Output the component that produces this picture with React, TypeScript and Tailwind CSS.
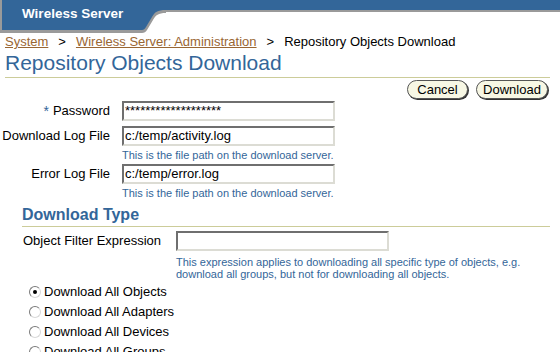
import React from "react";

const font = { fontFamily: '"Liberation Sans", Arial, sans-serif' };

function Field({ value, width = "w-[213px]" }: { value: string; width?: string }) {
  return (
    <div
      className={`${width} h-[20px] border-2 border-t-[#6f6f6f] border-l-[#6f6f6f] border-r-[#dcdcd4] border-b-[#dcdcd4] bg-white pl-[1px] text-[13px] leading-[16px] text-black whitespace-nowrap overflow-hidden`}
    >
      {value}
    </div>
  );
}

function Radio({ label, checked }: { label: string; checked?: boolean }) {
  return (
    <div className="flex h-[20px] items-center gap-[3px] pl-[29px] text-[13px] text-black">
      <span className="flex h-[12px] w-[12px] items-center justify-center rounded-full border border-t-[#7a7a7a] border-l-[#7a7a7a] border-r-[#d8d8d8] border-b-[#d8d8d8] bg-white">
        {checked && <span className="h-[4px] w-[4px] rounded-full bg-black" />}
      </span>
      <span className="whitespace-nowrap">{label}</span>
    </div>
  );
}

function PillButton({ label, width }: { label: string; width: string }) {
  return (
    <button
      type="button"
      className={`${width} h-[19px] rounded-full border border-[#555] bg-[#f7f7e4] text-center text-[13px] leading-[16px] text-black shadow-[1px_1px_0_#333]`}
    >
      {label}
    </button>
  );
}

export default function App() {
  return (
    <div className="h-[352px] w-[560px] overflow-hidden bg-white" style={font}>
      {/* branding bar */}
      <div className="flex h-[34px] items-start">
        <div className="w-[2px] h-[33px] bg-[#9a9a9a]" />
        <div className="flex h-[33px] w-[140px] items-center border-b-[3px] border-[#9a9a9a] bg-[#336699] pl-[20px] pb-[2px] text-[13.5px] font-bold text-white">
          Wireless Server
        </div>
        <svg width="24" height="33" viewBox="0 0 24 33" className="shrink-0">
          <path d="M0 3 H24 V13 C16 13 14 15 11 20 L5 30 C4 32 2 33 0 33 Z" fill="#9a9a9a" />
          <path d="M0 0 H24 V10 C15 10 13 12 10 17 L4 27 C3 29 1.5 30 0 30 Z" fill="#336699" />
        </svg>
        <div className="h-[12px] flex-1 border-b-2 border-[#9a9a9a] bg-[#336699]" />
      </div>

      {/* breadcrumbs */}
      <div className="flex items-center pl-[5px] text-[13px] leading-[15px] text-black">
        <span className="text-[#996633] underline">System</span>
        <span className="px-[10px]">&gt;</span>
        <span className="text-[#996633] underline">Wireless Server: Administration</span>
        <span className="px-[10px]">&gt;</span>
        <span>Repository Objects Download</span>
      </div>

      <div className="mx-[5px] mr-[10px] mt-[2px] border-b border-[#cccc99] pb-[2px] text-[21px] leading-[24px] text-[#336699]">
        Repository Objects Download
      </div>

      <div className="mt-[2px] flex justify-end gap-[8px] pr-[12px]">
        <PillButton label="Cancel" width="w-[61px]" />
        <PillButton label="Download" width="w-[72px]" />
      </div>

      {/* main fields */}
      <div className="mt-[2px] flex flex-col text-[13px] text-black">
        <div className="flex items-center">
          <div className="flex w-[110px] items-center justify-end gap-[4px]">
            <span className="text-[14px] leading-none text-[#336699]">*</span>
            <span>Password</span>
          </div>
          <div className="ml-[12px]">
            <Field value="*******************" />
          </div>
        </div>
        <div className="mt-[5px] flex items-center">
          <div className="w-[110px] whitespace-nowrap text-right">Download Log File</div>
          <div className="ml-[12px]">
            <Field value="c:/temp/activity.log" />
          </div>
        </div>
        <div className="ml-[122px] mt-[2px] text-[11px] leading-[14px] text-[#336699]">
          This is the file path on the download server.
        </div>
        <div className="mt-[2px] flex items-center">
          <div className="w-[110px] whitespace-nowrap text-right">Error Log File</div>
          <div className="ml-[12px]">
            <Field value="c:/temp/error.log" />
          </div>
        </div>
        <div className="ml-[122px] mt-[2px] text-[11px] leading-[14px] text-[#336699]">
          This is the file path on the download server.
        </div>
      </div>

      {/* download type */}
      <div className="ml-[22px] mr-[10px] mt-[6px] border-b border-[#cccc99] pb-[2px] text-[16px] font-bold leading-[18px] text-[#336699]">
        Download Type
      </div>

      <div className="mt-[4px] flex items-center text-[13px] text-black">
        <div className="w-[176px] whitespace-nowrap pl-[23px]">Object Filter Expression</div>
        <Field value="" />
      </div>
      <div className="ml-[176px] mt-[5px] text-[11px] leading-[12px] text-[#336699]">
        This expression applies to downloading all specific type of objects, e.g.
        <br />
        download all groups, but not for downloading all objects.
      </div>

      <div className="mt-[2px] flex flex-col">
        <Radio label="Download All Objects" checked />
        <Radio label="Download All Adapters" />
        <Radio label="Download All Devices" />
        <Radio label="Download All Groups" />
      </div>
    </div>
  );
}
